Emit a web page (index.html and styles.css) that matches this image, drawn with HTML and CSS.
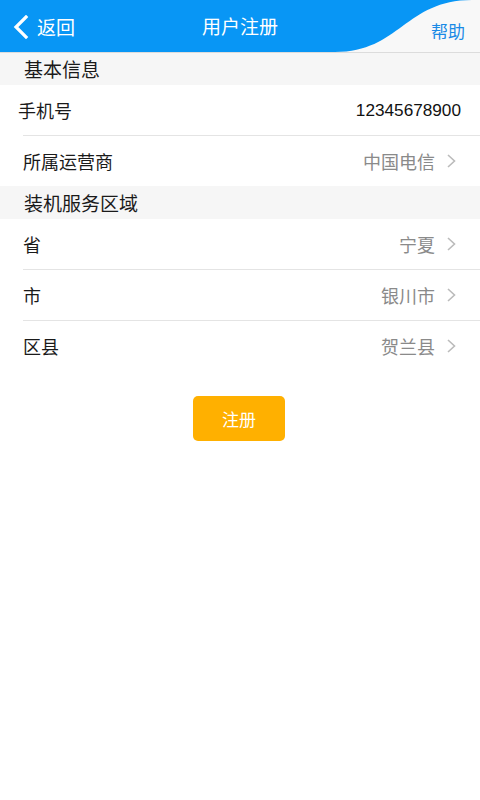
FILE: index.html
```html
<!DOCTYPE html>
<html lang="zh-CN">

<head>
  <meta charset="UTF-8" />
  <title>用户注册</title>
  <link rel="stylesheet" href="styles.css">
</head>

<body>
  <div class="header">
    <svg class="wave" width="480" height="52" viewBox="0 0 480 52">
      <path d="M335 52 C400 52 405 0 472 0 L480 0 L480 52 Z" fill="#f8f8f8" />
    </svg>
    <div class="back">
      <svg width="16" height="24" viewBox="0 0 16 24">
        <path d="M13 2 L3 12 L13 22" fill="none" stroke="#fff" stroke-width="3.2" stroke-linecap="square" />
      </svg>
      <span>返回</span>
    </div>
    <div class="title">用户注册</div>
    <div class="help">帮助</div>
  </div>

  <div class="section">基本信息</div>
  <ul class="list">
    <li class="phone">
      <span class="label">手机号</span>
      <span class="num">12345678900</span>
    </li>
    <li>
      <span class="label">所属运营商</span>
      <span class="value">中国电信</span>
      <svg class="arrow" width="9" height="14" viewBox="0 0 9 14">
        <path d="M1 1 L7.5 7 L1 13" fill="none" stroke="#bbb" stroke-width="1.6" />
      </svg>
    </li>
  </ul>

  <div class="section second">装机服务区域</div>
  <ul class="list">
    <li>
      <span class="label">省</span>
      <span class="value">宁夏</span>
      <svg class="arrow" width="9" height="14" viewBox="0 0 9 14">
        <path d="M1 1 L7.5 7 L1 13" fill="none" stroke="#bbb" stroke-width="1.6" />
      </svg>
    </li>
    <li>
      <span class="label">市</span>
      <span class="value">银川市</span>
      <svg class="arrow" width="9" height="14" viewBox="0 0 9 14">
        <path d="M1 1 L7.5 7 L1 13" fill="none" stroke="#bbb" stroke-width="1.6" />
      </svg>
    </li>
    <li>
      <span class="label">区县</span>
      <span class="value">贺兰县</span>
      <svg class="arrow" width="9" height="14" viewBox="0 0 9 14">
        <path d="M1 1 L7.5 7 L1 13" fill="none" stroke="#bbb" stroke-width="1.6" />
      </svg>
    </li>
  </ul>

  <div class="btn-wrap">
    <button class="btn">注册</button>
  </div>
</body>

</html>
```

FILE: styles.css
```css
* {
  padding: 0;
  margin: 0;
  list-style: none;
  border: 0;
}

body {
  width: 480px;
  background: #fff;
  font-family: "Noto Sans CJK SC", "Liberation Sans", sans-serif;
  color: #222;
}

.header {
  position: relative;
  height: 52px;
  background: #0896f5;
  border-bottom: 1px solid #dcdcdc;
  display: flex;
  align-items: center;
  justify-content: center;
}

.header .wave {
  position: absolute;
  left: 0;
  top: 0;
}

.back {
  position: absolute;
  left: 13px;
  top: 15px;
  display: flex;
  align-items: center;
  color: #fff;
  font-size: 19px;
  line-height: 24px;
}

.back span {
  margin-left: 8px;
}

.title {
  color: #fff;
  font-size: 19px;
  line-height: 24px;
  margin-top: -1px;
}

.help {
  position: absolute;
  right: 15px;
  top: 20px;
  color: #1a8ae6;
  font-size: 17px;
  line-height: 22px;
}

.section {
  height: 32px;
  line-height: 32px;
  padding-left: 24px;
  background: #f6f6f6;
  font-size: 19px;
  color: #1a1a1a;
}

.section.second {
  height: 33px;
  line-height: 34px;
}

.list li {
  height: 50px;
  margin-left: 23px;
  padding-right: 24px;
  display: flex;
  align-items: center;
  border-top: 1px solid #e4e4e4;
  font-size: 18px;
}

.list li:first-child {
  border-top: 0;
}

.list li.phone {
  margin-left: 18px;
  padding-right: 19px;
}

.label {
  flex: 1;
  color: #1a1a1a;
}

.num {
  font-family: "Liberation Sans", sans-serif;
  font-size: 17.2px;
  color: #111;
}

.value {
  color: #8a8a8a;
  font-size: 18px;
}

.arrow {
  margin-left: 12px;
}

.btn-wrap {
  display: flex;
  justify-content: center;
  padding-top: 25px;
  padding-right: 2px;
}

.btn {
  width: 92px;
  height: 45px;
  border-radius: 5px;
  background: #ffb000;
  color: #fff;
  font-family: "Noto Sans CJK SC", sans-serif;
  font-size: 17px;
}
```
